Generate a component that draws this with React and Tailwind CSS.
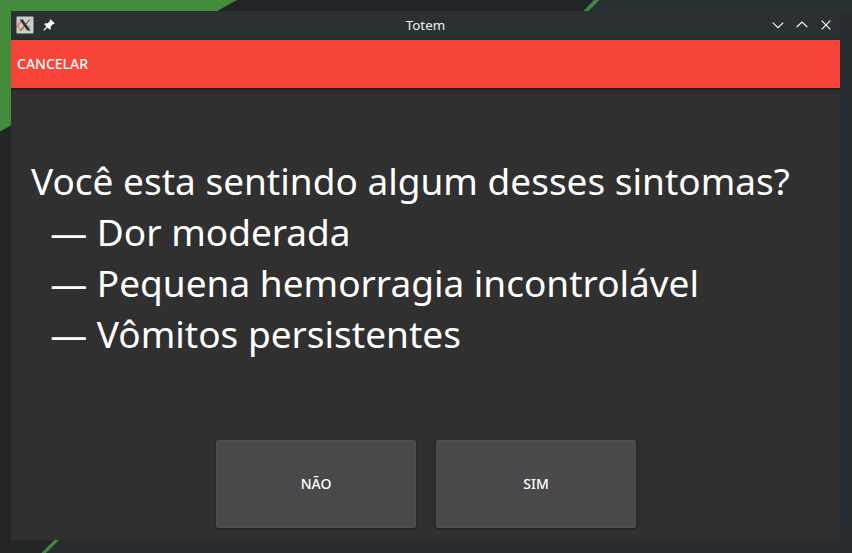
import React from 'react';

function Wallpaper() {
  return (
    <svg className="absolute inset-0" width="852" height="553" viewBox="0 0 852 553">
      <defs>
        <linearGradient id="base" x1="0" y1="0" x2="1" y2="0">
          <stop offset="0" stopColor="#232527" />
          <stop offset="0.25" stopColor="#25292b" />
          <stop offset="1" stopColor="#272c31" />
        </linearGradient>
      </defs>
      <rect width="852" height="553" fill="url(#base)" />
      <path d="M200 0H600L586 14H200Z" fill="#212528" />
      <path d="M600 0H852V14H586Z" fill="#293033" />
      <path d="M0 0H237L0 131.5Z" fill="#438c3c" />
      <path d="M594 0H599.5L587.5 12H582.5Z" fill="#43893f" />
      <path d="M62 537H852V553H46Z" fill="#272d2f" />
      <path d="M56.500 538H61L46 553H41.500Z" fill="#43893f" />
    </svg>
  );
}

function AppIcon() {
  return (
    <svg width="18" height="18" viewBox="0 0 18 18">
      <rect x="0.5" y="0.5" width="17" height="17" rx="1" fill="#cbcdca" />
      <path d="M7 5.5C3.5 6 1.5 8.500 2.200 11.500" fill="none" stroke="#ed7b55" strokeWidth="1.7" />
      <path d="M2.200 11.500L5 14.500L8 12" fill="none" stroke="#e6a052" strokeWidth="1.500" />
      <path d="M11.500 12L14 10" stroke="#8a9ca5" strokeWidth="1.500" />
      <path d="M13.800 3.500L4.500 14.500" stroke="#3b4043" strokeWidth="1" />
      <path d="M3.500 3.500H6.800L14.500 14.500H11.200Z" fill="#2c3034" />
    </svg>
  );
}

function PinIcon() {
  return (
    <svg width="12" height="12" viewBox="0 0 12 12" fill="#fcfcfc">
      <path d="M7.500 0.300L11.700 4.300L10.700 5.300L9.900 5.100L7.700 7.400L7.800 9.700L6.700 10.700L4.600 8.500L1 11.700L0.300 11L3.500 7.400L1.300 5.300L2.300 4.200L4.700 4.300L6.900 2.100L6.600 1.200Z" />
    </svg>
  );
}

function TitleBar() {
  return (
    <header className="grid h-[29px] shrink-0 grid-cols-[1fr_auto_1fr] items-start bg-[#2b3033] pt-[5px] pr-2 pl-[5px]">
      <div className="flex items-start gap-[9px]">
        <AppIcon />
        <div className="pt-[3px]">
          <PinIcon />
        </div>
      </div>
      <h1 className="pl-[3px] text-[13.330px] leading-[18px] text-[#eff0f1]">Totem</h1>
      <div className="flex items-center justify-end gap-3 pt-[3px] text-[#fcfcfc]">
        <svg width="12" height="12" viewBox="0 0 12 12" fill="none" stroke="currentColor" strokeWidth="1.150">
          <path d="M0.700 3.700L6 8.700L11.300 3.700" />
        </svg>
        <svg width="12" height="12" viewBox="0 0 12 12" fill="none" stroke="currentColor" strokeWidth="1.150">
          <path d="M0.700 8L6 3L11.300 8" />
        </svg>
        <svg width="12" height="12" viewBox="0 0 12 12" fill="none" stroke="currentColor" strokeWidth="1.150">
          <path d="M1.700 1.700L10.300 10.300M10.300 1.700L1.700 10.300" />
        </svg>
      </div>
    </header>
  );
}

function Choice({ children }) {
  return (
    <button className="h-[88px] w-[200px] rounded-[2px] border-2 border-[#504e50] bg-[#4a484a] pb-0.5 text-[14px] font-medium text-white shadow-[0_1px_3px_rgba(0,0,0,0.45)]">
      {children}
    </button>
  );
}

const symptoms = ['Dor moderada', 'Pequena hemorragia incontrolável', 'Vômitos persistentes'];

export default function App() {
  return (
    <div className="relative h-[553px] w-[852px] overflow-hidden font-['Noto_Sans',sans-serif]">
      <Wallpaper />
      <div className="relative flex h-full flex-col pt-[11px] pr-3 pb-[13px] pl-[11px]">
        <div className="flex grow flex-col overflow-hidden">
          <TitleBar />
          <div className="z-10 flex h-12 shrink-0 items-center bg-[#f64538] px-1.5 pb-0.5 shadow-[0_1px_3px_rgba(0,0,0,0.55)]">
            <button className="text-[14px] font-medium text-white">CANCELAR</button>
          </div>
          <main className="flex grow flex-col justify-between bg-[#313031] px-5 pt-[67px] pb-3">
            <div className="text-[37px] leading-[51px] whitespace-pre text-white">
              <p>Você esta sentindo algum desses sintomas?</p>
              {symptoms.map((s) => (
                <p key={s}>{'  — ' + s}</p>
              ))}
            </div>
            <div className="flex justify-center gap-5 pl-px">
              <Choice>NÃO</Choice>
              <Choice>SIM</Choice>
            </div>
          </main>
        </div>
      </div>
    </div>
  );
}
